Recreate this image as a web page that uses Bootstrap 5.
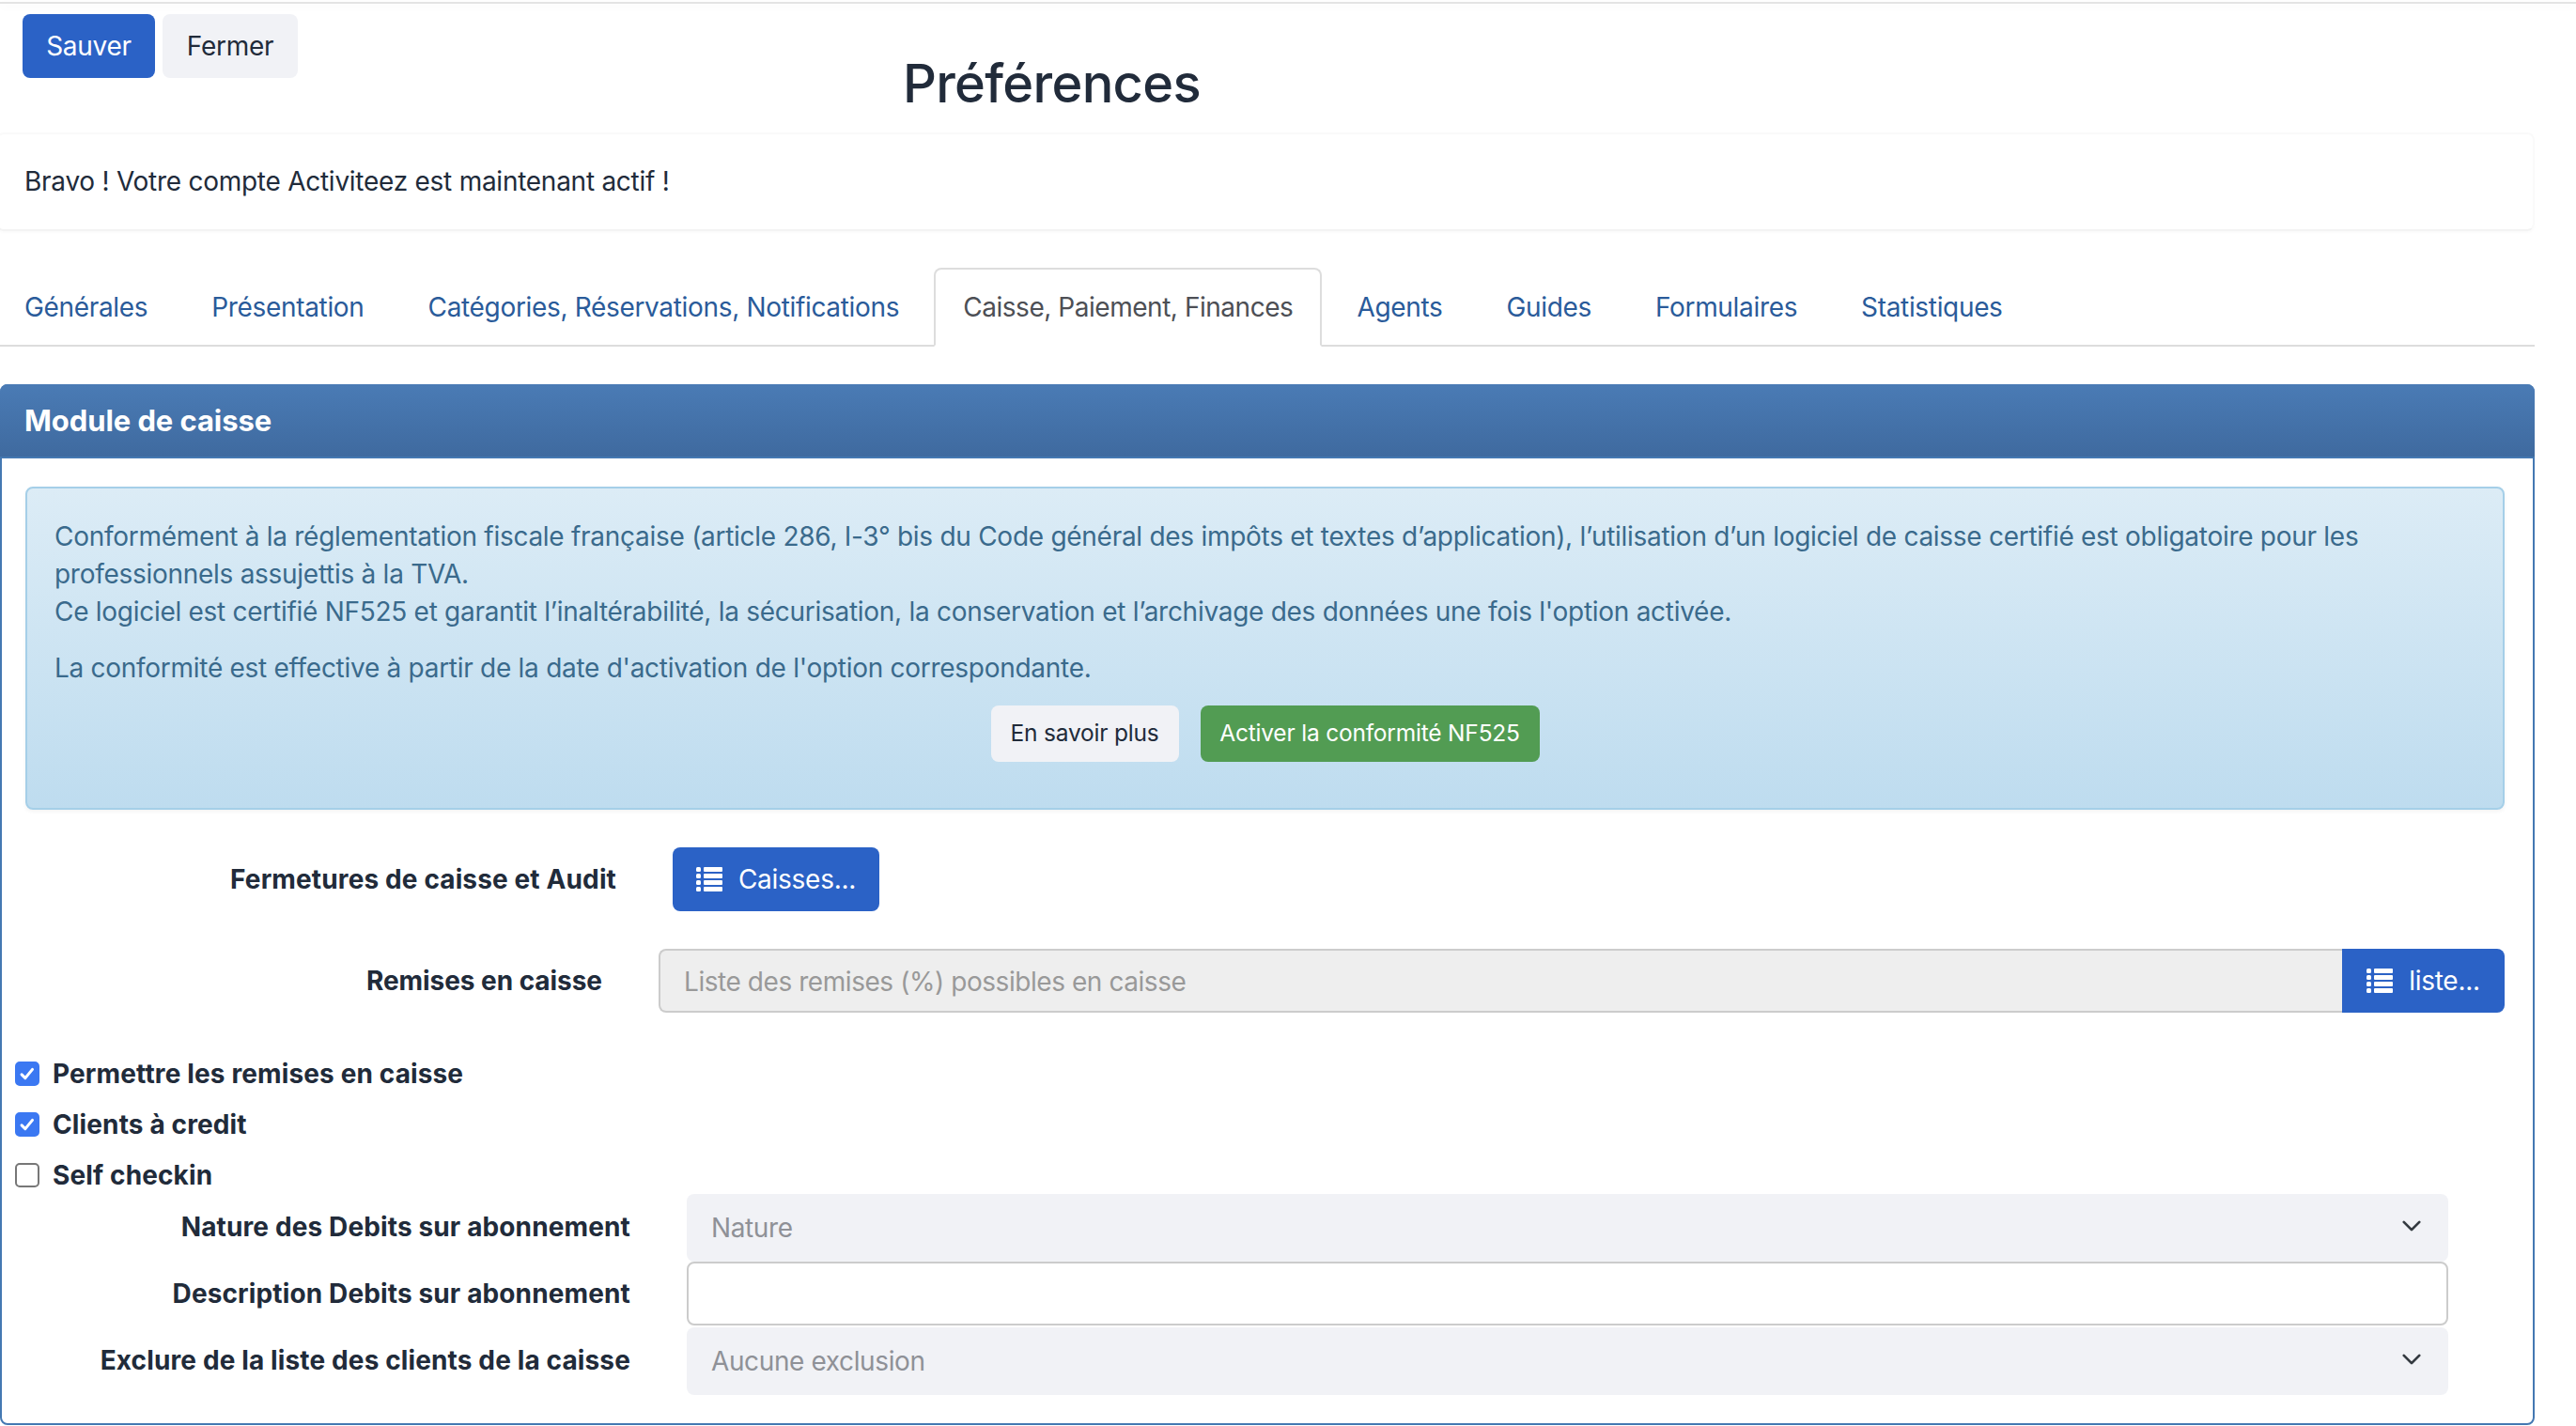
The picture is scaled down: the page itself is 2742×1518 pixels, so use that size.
<!DOCTYPE html>
<html lang="fr">
  <head>
    <meta charset="UTF-8" />
    <title>Préférences</title>
    <link rel="stylesheet" href="https://cdn.jsdelivr.net/npm/bootstrap@5.3.3/dist/css/bootstrap.min.css" />
    <script src="https://cdn.jsdelivr.net/npm/bootstrap@5.3.3/dist/js/bootstrap.bundle.min.js"></script>
    <style>
      html { font-size: 28px; }
      body { font-family: "Inter", "Liberation Sans", sans-serif; font-size: 28px; letter-spacing: -.26px; color: #212b3a; background: #fff; }
      .top-line { height: 2px; background: #e4e4e4; margin-top: 2px; box-shadow: 0 3px 10px rgba(0,0,0,.05); }
      .page { width: 2698px; }
      .btn { font-size: 28px; letter-spacing: -.26px; border-radius: 8px; border: 0; padding: 13px 26px; line-height: 42px; }
      .btn-blue { background: #2b62c6; color: #fff; }
      .btn-light2 { background: #f1f2f6; color: #212b3a; }
      .btn-top { width: 141px; padding: 13px 0; }
      .btn-top2 { width: 144px; padding: 13px 0; }
      .head-left { width: 961px; padding: 11px 0 0 24px; gap: 8px; }
      .page-title { font-size: 56px; font-weight: 500; letter-spacing: -.7px; line-height: 67px; margin: 52px 0 0; color: #212b3a; }
      .head-row { height: 137px; }
      .bravo { height: 105px; margin-left: -4px; padding: 0 28px 2px; border: 2px solid #fafafa; border-bottom-color: #f3f3f3; border-radius: 8px; box-shadow: 0 2px 3px rgba(0,0,0,.02); }
      .nav-tabs { margin-top: 39px; border-bottom: 2px solid #ddd; --bs-nav-tabs-border-width: 2px; }
      .nav-tabs .nav-link { font-size: 28px; letter-spacing: -.33px; line-height: 42px; color: #2a5b9a; padding: 19px 29px; margin-right: 6px; margin-bottom: -2px; border-radius: 8px 8px 0 0; border-width: 2px; }
      .nav-tabs .nav-link.active { color: #4d4f55; letter-spacing: -.46px; border-color: #ddd #ddd #fff; }
      .nav-tabs .nav-item:first-child { margin-left: -5px; }
      .panel { margin-top: 40px; border: 2px solid #4478b2; border-radius: 8px; height: 1108px; }
      .panel-head { height: 79px; margin: -2px -2px 0; padding: 2px 26px 0; background: linear-gradient(#4a7bb5, #3f6a9f); border-bottom: 2px solid #4478b2; color: #fff; font-size: 31px; font-weight: 700; letter-spacing: -.08px; border-radius: 8px 8px 0 0; }
      .panel-body { padding: 0 30px 0 25px; }
      .alert-grad { margin: 30px 0 0; height: 344px; padding: 31px 29px 0; background: linear-gradient(#dcecf6, #bedcef); border: 2px solid #a5cfe8; border-radius: 8px; color: #3a6a8c; font-size: 28px; letter-spacing: -.28px; line-height: 40px; box-shadow: 0 2px 4px rgba(0,0,0,.05); }
      .alert-grad p { margin: 0 0 20px; }
      .alert-btns { gap: 23px; }
      .btn-sm2 { font-size: 24.5px; letter-spacing: -.2px; line-height: 38px; padding: 10px 0 12px; }
      .btn-more { width: 200px; }
      .btn-nf { width: 361px; }
      .btn-green { background: #529c53; color: #fff; }
      .lbl { font-weight: 700; letter-spacing: .13px; text-align: right; flex: none; }
      .lbl-a { width: 629px; margin-right: 60px; }
      .lbl-b { width: 614px; margin-right: 60px; letter-spacing: -.05px; }
      .lbl-c { width: 644px; margin-right: 60px; }
      .lbl-up { padding-bottom: 3px; }
      .row-a { margin-top: 40px; }
      .btn-caisses { width: 220px; padding: 13px 0; }
      .list-ico { width: 28px; height: 26px; margin-right: 17px; vertical-align: -3px; fill: #fff; }
      .input-group .form-control { background: #eee; border: 2px solid #ccc; border-right: 0; font-size: 28px; letter-spacing: -.44px; line-height: 42px; padding: 13px 25px 11px; height: 68px; border-radius: 8px 0 0 8px; color: #999; }
      .input-group .form-control::placeholder { color: #999; }
      .input-group .btn { width: 173px; padding: 13px 0; border-radius: 0 8px 8px 0; }
      .checks { margin-top: 45px; margin-left: -11px; }
      .check-row { height: 40px; margin-bottom: 14px; font-weight: 700; letter-spacing: .13px; }
      .check-row:last-child { margin-bottom: 0; }
      .check-row .form-check-input { width: 26px; height: 26px; margin: 0 14px 0 0; border: 2px solid #777; border-radius: 5px; flex: none; }
      .check-row .form-check-input:checked { background-color: #3b78f2; border-color: #3b78f2; background-size: 100%; background-image: url("data:image/svg+xml,%3csvg xmlns='http://www.w3.org/2000/svg' viewBox='0 0 26 26'%3e%3cpath fill='none' stroke='%23fff' stroke-linecap='round' stroke-linejoin='round' stroke-width='3.6' d='M6 14l4.5 4.5L19.5 7.5'/%3e%3c/svg%3e"); }
      .field { width: 1875px; }
      .field.form-select { height: 72px; background-color: #f1f2f6; border: 0; border-radius: 8px; font-size: 28px; letter-spacing: -.38px; color: #8f9197; padding: 0 26px 1px; background-position: right 26px top 23px; background-size: 26px 22px; }
      .field.form-control { height: 68px; border: 2px solid #ccc; border-radius: 8px; }
      .sp { margin-top: 2px; }
    </style>
  </head>
  <body class="overflow-hidden">
    <div class="top-line"></div>
    <div class="page">
      <div class="d-flex head-row">
        <div class="head-left d-flex align-items-start">
          <button type="button" class="btn btn-blue btn-top">Sauver</button>
          <button type="button" class="btn btn-light2 btn-top2">Fermer</button>
        </div>
        <h1 class="page-title">Préférences</h1>
      </div>

      <div class="bravo d-flex align-items-center">Bravo ! Votre compte Activiteez est maintenant actif !</div>

      <ul class="nav nav-tabs">
        <li class="nav-item"><a class="nav-link" href="#">Générales</a></li>
        <li class="nav-item"><a class="nav-link" href="#">Présentation</a></li>
        <li class="nav-item"><a class="nav-link" href="#">Catégories, Réservations, Notifications</a></li>
        <li class="nav-item"><a class="nav-link active" href="#">Caisse, Paiement, Finances</a></li>
        <li class="nav-item"><a class="nav-link" href="#">Agents</a></li>
        <li class="nav-item"><a class="nav-link" href="#">Guides</a></li>
        <li class="nav-item"><a class="nav-link" href="#">Formulaires</a></li>
        <li class="nav-item"><a class="nav-link" href="#">Statistiques</a></li>
      </ul>

      <div class="panel">
        <div class="panel-head d-flex align-items-center">Module de caisse</div>
        <div class="panel-body">
          <div class="alert-grad">
            <p>Conformément à la réglementation fiscale française (article 286, I-3° bis du Code général des impôts et textes d’application), l’utilisation d’un logiciel de caisse certifié est obligatoire pour les professionnels assujettis à la TVA.<br />Ce logiciel est certifié NF525 et garantit l’inaltérabilité, la sécurisation, la conservation et l’archivage des données une fois l'option activée.</p>
            <p>La conformité est effective à partir de la date d'activation de l'option correspondante.</p>
            <div class="d-flex justify-content-center alert-btns">
              <button type="button" class="btn btn-light2 btn-sm2 btn-more">En savoir plus</button>
              <button type="button" class="btn btn-green btn-sm2 btn-nf">Activer la conformité NF525</button>
            </div>
          </div>

          <div class="d-flex align-items-center row-a">
            <div class="lbl lbl-a">Fermetures de caisse et Audit</div>
            <button type="button" class="btn btn-blue btn-caisses">
              <svg class="list-ico" viewBox="0 0 28 26"><rect x="0" y="0" width="5" height="5" rx="1.5"/><rect x="8" y="0" width="20" height="5" rx="1"/><rect x="0" y="7" width="5" height="5" rx="1.5"/><rect x="8" y="7" width="20" height="5" rx="1"/><rect x="0" y="14" width="5" height="5" rx="1.5"/><rect x="8" y="14" width="20" height="5" rx="1"/><rect x="0" y="21" width="5" height="5" rx="1.5"/><rect x="8" y="21" width="20" height="5" rx="1"/></svg>Caisses...
            </button>
          </div>

          <div class="d-flex align-items-center row-a">
            <div class="lbl lbl-b">Remises en caisse</div>
            <div class="input-group flex-fill">
              <input type="text" class="form-control" placeholder="Liste des remises (%) possibles en caisse" disabled />
              <button type="button" class="btn btn-blue">
                <svg class="list-ico" viewBox="0 0 28 26"><rect x="0" y="0" width="5" height="5" rx="1.5"/><rect x="8" y="0" width="20" height="5" rx="1"/><rect x="0" y="7" width="5" height="5" rx="1.5"/><rect x="8" y="7" width="20" height="5" rx="1"/><rect x="0" y="14" width="5" height="5" rx="1.5"/><rect x="8" y="14" width="20" height="5" rx="1"/><rect x="0" y="21" width="5" height="5" rx="1.5"/><rect x="8" y="21" width="20" height="5" rx="1"/></svg>liste...
              </button>
            </div>
          </div>

          <div class="checks">
            <div class="check-row d-flex align-items-center"><input class="form-check-input" type="checkbox" checked />Permettre les remises en caisse</div>
            <div class="check-row d-flex align-items-center"><input class="form-check-input" type="checkbox" checked />Clients à credit</div>
            <div class="check-row d-flex align-items-center"><input class="form-check-input" type="checkbox" />Self checkin</div>
          </div>

          <div class="d-flex align-items-center">
            <div class="lbl lbl-c lbl-up">Nature des Debits sur abonnement</div>
            <select class="form-select field"><option>Nature</option></select>
          </div>
          <div class="d-flex align-items-center">
            <div class="lbl lbl-c">Description Debits sur abonnement</div>
            <input type="text" class="form-control field" />
          </div>
          <div class="d-flex align-items-center sp">
            <div class="lbl lbl-c lbl-up">Exclure de la liste des clients de la caisse</div>
            <select class="form-select field"><option>Aucune exclusion</option></select>
          </div>
        </div>
      </div>
    </div>
  </body>
</html>
